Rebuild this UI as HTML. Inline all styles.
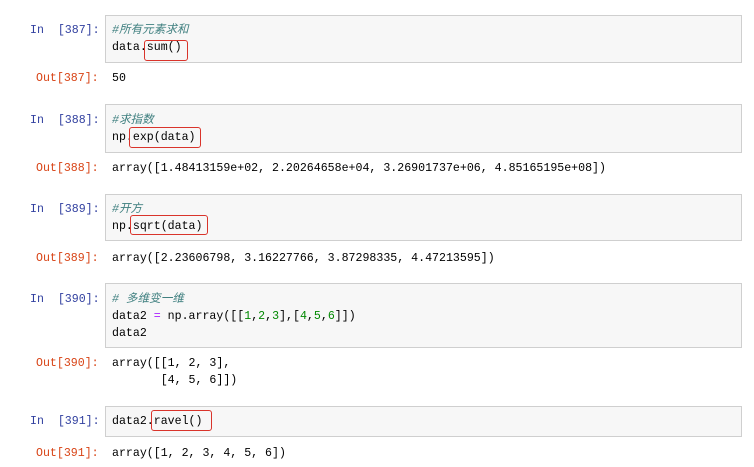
<!DOCTYPE html>
<html><head><meta charset="utf-8"><style>
body{margin:0;width:754px;height:467px;background:#fff;position:relative;overflow:hidden;font-family:"Liberation Mono","Noto Sans CJK SC",monospace;font-size:11.6px;color:#000}
.box{position:absolute;left:105px;width:635px;background:#f7f7f7;border:1px solid #cfcfcf}
.t{position:absolute;line-height:17px;white-space:pre}
.in{color:#303f9f;left:30px}
.out{color:#d84315;left:36px}
.c{color:#408080;font-style:italic}
.r{position:absolute;border:1.3px solid #d9342b;border-radius:3px}
.g{color:#080}.p{color:#a2f}
</style></head><body>
<div class="box" style="top:15px;height:46px"></div>
<div class="box" style="top:104px;height:47px"></div>
<div class="box" style="top:194px;height:45px"></div>
<div class="box" style="top:283px;height:63px"></div>
<div class="box" style="top:406px;height:29px"></div>

<div class="t in" style="top:22px">In  [387]:</div>
<div class="t" style="left:112px;top:22px"><span class="c">#所有元素求和</span>
data.sum()</div>
<div class="r" style="left:144px;top:40px;width:42px;height:19px"></div>
<div class="t out" style="top:70px">Out[387]:</div>
<div class="t" style="left:112px;top:70px">50</div>

<div class="t in" style="top:112px">In  [388]:</div>
<div class="t" style="left:112px;top:112px"><span class="c">#求指数</span>
np.exp(data)</div>
<div class="r" style="left:129px;top:127px;width:70px;height:19px"></div>
<div class="t out" style="top:160px">Out[388]:</div>
<div class="t" style="left:112px;top:160px">array([1.48413159e+02, 2.20264658e+04, 3.26901737e+06, 4.85165195e+08])</div>

<div class="t in" style="top:201px">In  [389]:</div>
<div class="t" style="left:112px;top:201px"><span class="c">#开方</span>
np.sqrt(data)</div>
<div class="r" style="left:130px;top:215px;width:76px;height:18px"></div>
<div class="t out" style="top:250px">Out[389]:</div>
<div class="t" style="left:112px;top:250px">array([2.23606798, 3.16227766, 3.87298335, 4.47213595])</div>

<div class="t in" style="top:291px">In  [390]:</div>
<div class="t" style="left:112px;top:291px"><span class="c"># 多维变一维</span>
data2 <span class="p">=</span> np.array([[<span class="g">1</span>,<span class="g">2</span>,<span class="g">3</span>],[<span class="g">4</span>,<span class="g">5</span>,<span class="g">6</span>]])
data2</div>
<div class="t out" style="top:355px">Out[390]:</div>
<div class="t" style="left:112px;top:355px">array([[1, 2, 3],
       [4, 5, 6]])</div>

<div class="t in" style="top:413px">In  [391]:</div>
<div class="t" style="left:112px;top:413px">data2.ravel()</div>
<div class="r" style="left:151px;top:410px;width:59px;height:19px"></div>
<div class="t out" style="top:445px">Out[391]:</div>
<div class="t" style="left:112px;top:445px">array([1, 2, 3, 4, 5, 6])</div>
</body></html>
